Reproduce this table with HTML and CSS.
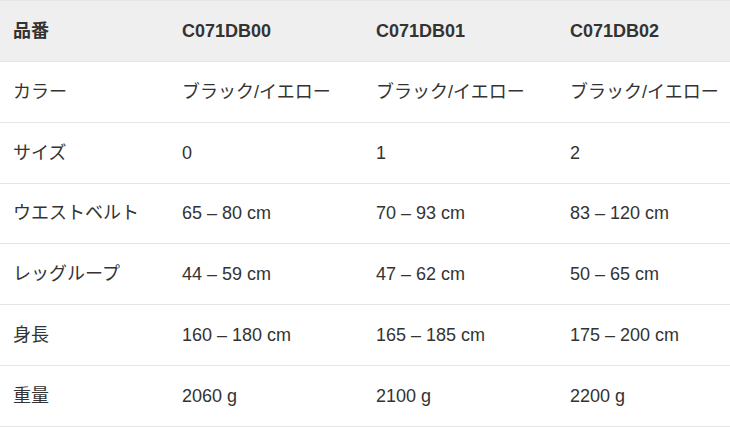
FILE: index.html
```html
<!DOCTYPE html>
<html lang="ja">
<head>
<meta charset="utf-8">
<link rel="stylesheet" href="styles.css">
</head>
<body>
<table class="spec">
  <colgroup>
    <col class="c1"><col class="c2"><col class="c3"><col class="c4">
  </colgroup>
  <thead>
    <tr><th>品番</th><th>C071DB00</th><th>C071DB01</th><th>C071DB02</th></tr>
  </thead>
  <tbody>
    <tr><td>カラー</td><td>ブラック/イエロー</td><td>ブラック/イエロー</td><td>ブラック/イエロー</td></tr>
    <tr><td>サイズ</td><td>0</td><td>1</td><td>2</td></tr>
    <tr><td>ウエストベルト</td><td>65 – 80 cm</td><td>70 – 93 cm</td><td>83 – 120 cm</td></tr>
    <tr><td>レッグループ</td><td>44 – 59 cm</td><td>47 – 62 cm</td><td>50 – 65 cm</td></tr>
    <tr><td>身長</td><td>160 – 180 cm</td><td>165 – 185 cm</td><td>175 – 200 cm</td></tr>
    <tr><td>重量</td><td>2060 g</td><td>2100 g</td><td>2200 g</td></tr>
  </tbody>
</table>
</body>
</html>
```

FILE: styles.css
```css
html, body {
  margin: 0;
  padding: 0;
  background: #ffffff;
}
body {
  font-family: "Liberation Sans", Arial, "Noto Sans CJK JP", sans-serif;
  font-size: 18px;
  color: #333333;
}
.spec {
  width: 730px;
  border-collapse: collapse;
  table-layout: fixed;
}
.c1 { width: 169px; }
.c2 { width: 194px; }
.c3 { width: 194px; }
.c4 { width: 173px; }
.spec th,
.spec td {
  text-align: left;
  padding: 17.93px 0 17.93px 13px;
  line-height: 24px;
  border-top: 1px solid #e5e5e5;
  border-bottom: 1px solid #e5e5e5;
  white-space: nowrap;
  vertical-align: middle;
}
.spec th {
  font-weight: bold;
  background: #efefef;
}
.spec td {
  font-weight: normal;
}
```
